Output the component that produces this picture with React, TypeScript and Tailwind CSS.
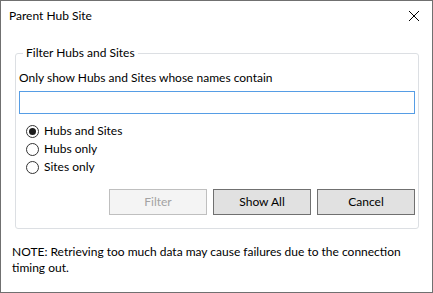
import React, { useState } from 'react';

const font = { fontFamily: 'Lato, "Segoe UI", sans-serif' };

function Radio({ label, checked, onClick }: { label: string; checked: boolean; onClick: () => void }) {
  return (
    <button type="button" onClick={onClick} className="flex items-center h-[18px] text-left">
      <span className="w-[13px] h-[13px] rounded-full border border-[#333] bg-white flex items-center justify-center">
        {checked && <span className="w-[7px] h-[7px] rounded-full bg-[#1b1b1b]" />}
      </span>
      <span className="ml-[5px] text-[12px] text-black leading-none">{label}</span>
    </button>
  );
}

export default function App() {
  const [mode, setMode] = useState('both');
  const [query, setQuery] = useState('');

  return (
    <div style={font} className="w-[433px] h-[293px] bg-white border border-[#707070] flex flex-col text-[12px] text-black">
      <div className="h-[30px] flex items-center justify-between pl-[8px] pr-[10px]">
        <span className="leading-none">Parent Hub Site</span>
        <svg width="12" height="12" viewBox="0 0 12 12" className="mr-[2px]">
          <path d="M1 1 L11 11 M11 1 L1 11" stroke="#000" strokeWidth="1" />
        </svg>
      </div>

      <fieldset className="mt-[16px] ml-[14px] w-[404px] border border-[#dcdfe3] rounded-[3px] px-[3px] pb-[13px]">
        <legend className="ml-[4px] px-[3px] leading-none text-[12px]">Filter Hubs and Sites</legend>
        <div className="pt-[13px] leading-none">Only show Hubs and Sites whose names contain</div>
        <input
          value={query}
          onChange={(e) => setQuery(e.target.value)}
          className="mt-[7px] w-[396px] h-[23px] border border-[#569de5] outline-none px-[3px] text-[12px]"
        />
        <div className="mt-[8px] ml-[7px] flex flex-col">
          <Radio label="Hubs and Sites" checked={mode === 'both'} onClick={() => setMode('both')} />
          <Radio label="Hubs only" checked={mode === 'hubs'} onClick={() => setMode('hubs')} />
          <Radio label="Sites only" checked={mode === 'sites'} onClick={() => setMode('sites')} />
        </div>
        <div className="mt-[13px] flex justify-end gap-[6px]">
          <button disabled className="w-[98px] h-[26px] border border-[#bfbfbf] bg-[#f4f4f4] text-[#a3a3a3]">Filter</button>
          <button className="w-[98px] h-[26px] border border-[#707070] bg-[#e1e1e1]">Show All</button>
          <button className="w-[98px] h-[26px] border border-[#707070] bg-[#e1e1e1]">Cancel</button>
        </div>
      </fieldset>

      <p className="mt-[15px] ml-[11px] mr-[20px] leading-[16px]">
        NOTE: Retrieving too much data may cause failures due to the connection timing out.
      </p>
    </div>
  );
}
